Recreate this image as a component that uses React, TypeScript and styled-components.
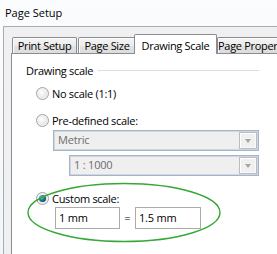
import React from "react";
import styled, { createGlobalStyle } from "styled-components";

const GlobalStyle = createGlobalStyle`
  html, body { margin: 0; padding: 0; }
  body {
    font-family: "Open Sans", "Noto Sans", sans-serif;
    font-size: 11px;
    color: #000;
    background: #f7f9fb;
  }
`;

const Root = styled.div`
  position: relative;
  width: 277px;
  height: 254px;
  overflow: hidden;
  display: flex;
  flex-direction: column;
  background: linear-gradient(#fbfcfd, #f3f6f9);
`;

const TitleBar = styled.div`
  height: 26px;
  flex: none;
  box-sizing: border-box;
  padding: 0 0 1px 5px;
  display: flex;
  align-items: center;
  line-height: 15px;
  color: #000;
`;

const Frame = styled.div`
  flex: 1;
  margin-left: 3px;
  border-top: 1px solid #a9adb2;
  border-left: 1px solid #a9adb2;
  background: #f0f0f0;
  display: flex;
  flex-direction: column;
`;

const TabRow = styled.div`
  height: 26px;
  flex: none;
  box-sizing: border-box;
  padding-left: 8px;
  display: flex;
  align-items: flex-end;
`;

const Tab = styled.div<{ $w: number; $ml?: number; $active?: boolean }>`
  position: relative;
  flex: none;
  box-sizing: border-box;
  width: ${(p) => p.$w}px;
  margin-left: ${(p) => p.$ml ?? 0}px;
  height: ${(p) => (p.$active ? 20 : 16)}px;
  margin-bottom: ${(p) => (p.$active ? -1 : 0)}px;
  padding-top: ${(p) => (p.$active ? 3 : 0)}px;
  z-index: ${(p) => (p.$active ? 2 : 1)};
  border: 1px solid #898c95;
  border-bottom: none;
  border-radius: 2px 2px 0 0;
  background: ${(p) =>
    p.$active ? "#fff" : "linear-gradient(#f4f4f4, #ececec 50%, #e3e3e3 50%, #dcdcdc)"};
  box-shadow: ${(p) => (p.$active ? "none" : "inset 1px 1px 0 #fbfbfb")};
  text-align: center;
  line-height: 15px;
  letter-spacing: -0.3px;
  white-space: nowrap;
`;

const Panel = styled.div`
  flex: 1;
  margin-left: 7px;
  border-top: 1px solid #898c95;
  border-left: 1px solid #898c95;
  background: #fff;
  display: flex;
  flex-direction: column;
`;

const GroupHeader = styled.div`
  margin: 8px 0 0 14px;
  width: 233px;
  height: 16px;
  display: flex;
  align-items: center;
  gap: 5px;
  line-height: 15px;
  letter-spacing: -0.3px;
  white-space: nowrap;
`;

const GroupLine = styled.div`
  flex: 1;
  height: 1px;
  background: #d5dfe5;
`;

const RadioRow = styled.div<{ $mt: number }>`
  margin-top: ${(p) => p.$mt}px;
  padding-left: 24px;
  height: 16px;
  display: flex;
  align-items: center;
  gap: 3px;
  line-height: 15px;
  letter-spacing: -0.3px;
  white-space: nowrap;
`;

const Radio = styled.span<{ $checked?: boolean }>`
  position: relative;
  flex: none;
  box-sizing: border-box;
  width: 13px;
  height: 13px;
  border-radius: 50%;
  border: 1px solid #a2a2a2;
  background: radial-gradient(circle at 40% 40%, #ffffff 0, #ececec 45%, #d6d6d6 100%);
  box-shadow: inset 0 0 0 1px #f4f4f4;
  &::after {
    content: "";
    display: ${(p) => (p.$checked ? "block" : "none")};
    position: absolute;
    left: 2px;
    top: 2px;
    width: 7px;
    height: 7px;
    border-radius: 50%;
    background: radial-gradient(circle at 38% 35%, #8fe0d8 0, #2a8aa0 35%, #0e4a6a 75%, #0b3450 100%);
  }
`;

const Combo = styled.div<{ $ml: number; $w: number; $mt: number }>`
  margin: ${(p) => p.$mt}px 0 0 ${(p) => p.$ml}px;
  width: ${(p) => p.$w}px;
  height: 21px;
  box-sizing: border-box;
  border: 1px solid #a6b4c5;
  box-shadow: inset 0 0 0 1px #cdd8e4;
  background: #efefef;
  display: flex;
  align-items: stretch;
`;

const ComboText = styled.div`
  flex: 1;
  padding: 0 0 2px 4px;
  display: flex;
  align-items: center;
  line-height: 15px;
  color: #6d6d6d;
  letter-spacing: -0.2px;
  white-space: nowrap;
`;

const ComboButton = styled.div`
  flex: none;
  width: 18px;
  margin: 1px 1px 1px 0;
  box-sizing: border-box;
  border: 1px solid #b9bcc0;
  box-shadow: inset 1px 1px 0 #fff, inset -1px -1px 0 #fafafa;
  background: #f0f0f0;
  display: flex;
  align-items: center;
  justify-content: center;
`;

const Arrow = styled.span`
  width: 0;
  height: 0;
  border-left: 3.5px solid transparent;
  border-right: 3.5px solid transparent;
  border-top: 4px solid #a5a5a5;
  margin-top: 1px;
`;

const InputRow = styled.div`
  margin: 1px 0 0 43px;
  height: 22px;
  display: flex;
  align-items: stretch;
`;

const TextBox = styled.div<{ $w: number }>`
  width: ${(p) => p.$w}px;
  box-sizing: border-box;
  border: 1px solid #ababab;
  background: #fff;
  padding: 0 0 2px 3px;
  display: flex;
  align-items: center;
  line-height: 15px;
  letter-spacing: -0.2px;
  white-space: nowrap;
`;

const Equals = styled.div`
  width: 15px;
  display: flex;
  align-items: center;
  justify-content: center;
  padding-bottom: 2px;
  box-sizing: border-box;
`;

const Highlight = styled.svg`
  position: absolute;
  left: 0;
  top: 0;
  pointer-events: none;
  z-index: 5;
`;

export default function App() {
  return (
    <>
      <GlobalStyle />
      <Root>
        <TitleBar>Page Setup</TitleBar>
        <Frame>
          <TabRow>
            <Tab $w={65}>Print Setup</Tab>
            <Tab $w={58} $ml={1}>Page Size</Tab>
            <Tab $w={83} $ml={-2} $active>Drawing Scale</Tab>
            <Tab $w={71}>Page Properties</Tab>
          </TabRow>
          <Panel>
            <GroupHeader>
              Drawing scale
              <GroupLine />
            </GroupHeader>
            <RadioRow $mt={7}>
              <Radio />
              No scale (1:1)
            </RadioRow>
            <RadioRow $mt={11}>
              <Radio />
              Pre-defined scale:
            </RadioRow>
            <Combo $mt={2} $ml={41} $w={206}>
              <ComboText>Metric</ComboText>
              <ComboButton>
                <Arrow />
              </ComboButton>
            </Combo>
            <Combo $mt={4} $ml={57} $w={190}>
              <ComboText>1 : 1000</ComboText>
              <ComboButton>
                <Arrow />
              </ComboButton>
            </Combo>
            <RadioRow $mt={14}>
              <Radio $checked />
              Custom scale:
            </RadioRow>
            <InputRow>
              <TextBox $w={65}>1 mm</TextBox>
              <Equals>=</Equals>
              <TextBox $w={66}>1.5 mm</TextBox>
            </InputRow>
          </Panel>
        </Frame>
        <Highlight width={277} height={254} viewBox="0 0 277 254">
          <ellipse cx={124} cy={212.5} rx={96} ry={29} fill="none" stroke="#35a835" strokeWidth={1.4} />
        </Highlight>
      </Root>
    </>
  );
}
